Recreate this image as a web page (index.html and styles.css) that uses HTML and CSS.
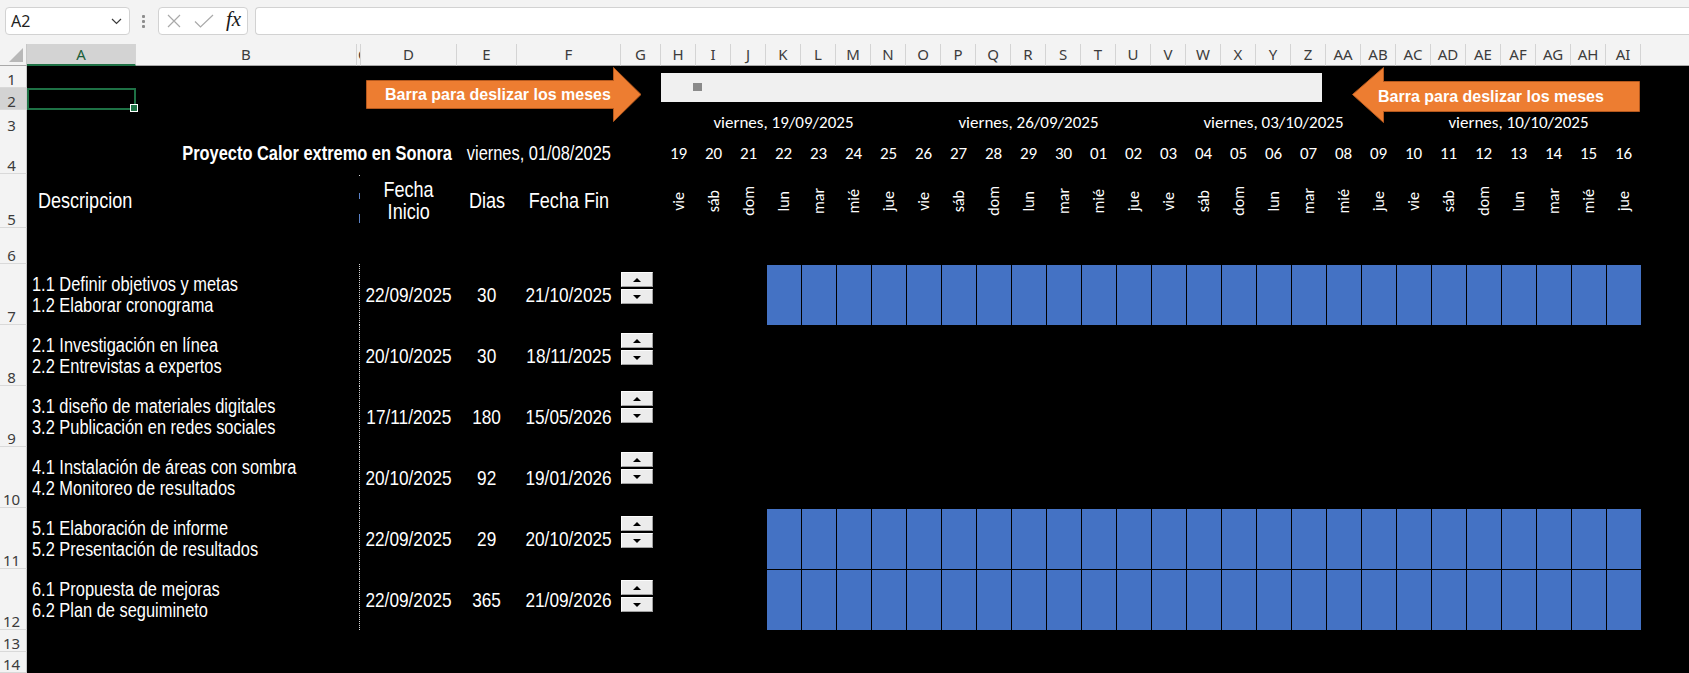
FILE: index.html
```html
<!DOCTYPE html>
<html lang="es">
<head>
<meta charset="utf-8">
<title>Proyecto Calor extremo en Sonora</title>
<link rel="stylesheet" href="styles.css">
</head>
<body>
<div class="app">
  <div class="toolbar">
    <div class="namebox"><span>A2</span>
      <svg width="11" height="7" viewBox="0 0 11 7"><path d="M1 1l4.5 4.5L10 1" fill="none" stroke="#3a3a3a" stroke-width="1.2"/></svg>
    </div>
    <div class="sepdots"><i></i><i></i><i></i></div>
    <div class="fxbox">
      <svg class="ic-x" width="14" height="14" viewBox="0 0 14 14"><path d="M1 1L13 13M13 1L1 13" stroke="#a9a9a9" stroke-width="1.2"/></svg>
      <svg class="ic-ok" width="20" height="14" viewBox="0 0 20 14"><path d="M1 7.5L6.5 13L19 1" fill="none" stroke="#a9a9a9" stroke-width="1.2"/></svg>
      <span class="fx">fx</span>
    </div>
    <div class="formula"></div>
  </div>

  <div class="sheet">
    <div class="row hdr">
      <div class="corner"><svg width="14" height="14" viewBox="0 0 14 14"><path d="M14 0V14H0Z" fill="#b8b8b8"/></svg></div>
      <div class="ch sel">A</div>
      <div class="ch">B</div>
      <div class="ch ccol">C</div>
      <div class="ch">D</div>
      <div class="ch">E</div>
      <div class="ch">F</div>
      <div class="ch">G</div>
      <div class="tl days">
        <div class="ch">H</div><div class="ch">I</div><div class="ch">J</div><div class="ch">K</div><div class="ch">L</div><div class="ch">M</div><div class="ch">N</div>
        <div class="ch">O</div><div class="ch">P</div><div class="ch">Q</div><div class="ch">R</div><div class="ch">S</div><div class="ch">T</div><div class="ch">U</div>
        <div class="ch">V</div><div class="ch">W</div><div class="ch">X</div><div class="ch">Y</div><div class="ch">Z</div><div class="ch">AA</div><div class="ch">AB</div>
        <div class="ch">AC</div><div class="ch">AD</div><div class="ch">AE</div><div class="ch">AF</div><div class="ch">AG</div><div class="ch">AH</div><div class="ch">AI</div>
      </div>
      <div class="ch rest"></div>
    </div>

    <div class="row r22"><div class="rh">1</div></div>
    <div class="row r22"><div class="rh rsel">2</div><div class="a2"></div></div>
    <div class="row r3"><div class="rh">3</div>
      <div class="tl weeks">
        <div>viernes, 19/09/2025</div><div>viernes, 26/09/2025</div><div>viernes, 03/10/2025</div><div>viernes, 10/10/2025</div>
      </div>
    </div>
    <div class="row r4"><div class="rh">4</div>
      <div class="cell title narrow"><span>Proyecto Calor extremo en Sonora</span></div>
      <div class="cell ctr start narrow"><span>viernes, 01/08/2025</span></div>
      <div class="tl days daynum">
        <div>19</div><div>20</div><div>21</div><div>22</div><div>23</div><div>24</div><div>25</div>
        <div>26</div><div>27</div><div>28</div><div>29</div><div>30</div><div>01</div><div>02</div>
        <div>03</div><div>04</div><div>05</div><div>06</div><div>07</div><div>08</div><div>09</div>
        <div>10</div><div>11</div><div>12</div><div>13</div><div>14</div><div>15</div><div>16</div>
      </div>
    </div>
    <div class="row r5"><div class="rh">5</div>
      <div class="cell desc narrow big"><span>Descripcion</span></div>
      <div class="cmark"><i class="dot"></i><i class="dash1"></i><i class="dash2"></i></div>
      <div class="cell ctr two narrow big"><span>Fecha</span><span>Inicio</span></div>
      <div class="cell ctr narrow big"><span>Dias</span></div>
      <div class="cell ctr narrow big"><span>Fecha Fin</span></div>
      <div class="tl days dayname">
        <div><span>vie</span></div><div><span>sáb</span></div><div><span>dom</span></div><div><span>lun</span></div><div><span>mar</span></div><div><span>mié</span></div><div><span>jue</span></div>
        <div><span>vie</span></div><div><span>sáb</span></div><div><span>dom</span></div><div><span>lun</span></div><div><span>mar</span></div><div><span>mié</span></div><div><span>jue</span></div>
        <div><span>vie</span></div><div><span>sáb</span></div><div><span>dom</span></div><div><span>lun</span></div><div><span>mar</span></div><div><span>mié</span></div><div><span>jue</span></div>
        <div><span>vie</span></div><div><span>sáb</span></div><div><span>dom</span></div><div><span>lun</span></div><div><span>mar</span></div><div><span>mié</span></div><div><span>jue</span></div>
      </div>
    </div>
    <div class="row r6"><div class="rh">6</div></div>

    <div class="row task-row"><div class="rh">7</div>
      <div class="cell task narrow"><span>1.1 Definir objetivos y metas</span><span>1.2 Elaborar cronograma</span></div>
      <div class="cdot"></div>
      <div class="cell ctr narrow num"><span>22/09/2025</span></div>
      <div class="cell ctr narrow num"><span>30</span></div>
      <div class="cell ctr narrow num"><span>21/10/2025</span></div>
      <div class="spin"><b class="up"></b><b class="down"></b></div>
      <div class="tl"><div class="bar"></div></div>
    </div>
    <div class="row task-row"><div class="rh">8</div>
      <div class="cell task narrow"><span>2.1 Investigación en línea</span><span>2.2 Entrevistas a expertos</span></div>
      <div class="cdot"></div>
      <div class="cell ctr narrow num"><span>20/10/2025</span></div>
      <div class="cell ctr narrow num"><span>30</span></div>
      <div class="cell ctr narrow num"><span>18/11/2025</span></div>
      <div class="spin"><b class="up"></b><b class="down"></b></div>
    </div>
    <div class="row task-row"><div class="rh">9</div>
      <div class="cell task narrow"><span>3.1 diseño de materiales digitales</span><span>3.2 Publicación en redes sociales</span></div>
      <div class="cdot"></div>
      <div class="cell ctr narrow num"><span>17/11/2025</span></div>
      <div class="cell ctr narrow num"><span>180</span></div>
      <div class="cell ctr narrow num"><span>15/05/2026</span></div>
      <div class="spin spin-hi"><b class="up"></b><b class="down"></b></div>
    </div>
    <div class="row task-row"><div class="rh">10</div>
      <div class="cell task narrow"><span>4.1 Instalación de áreas con sombra</span><span>4.2 Monitoreo de resultados</span></div>
      <div class="cdot"></div>
      <div class="cell ctr narrow num"><span>20/10/2025</span></div>
      <div class="cell ctr narrow num"><span>92</span></div>
      <div class="cell ctr narrow num"><span>19/01/2026</span></div>
      <div class="spin spin-hi"><b class="up"></b><b class="down"></b></div>
    </div>
    <div class="row task-row"><div class="rh">11</div>
      <div class="cell task narrow"><span>5.1 Elaboración de informe</span><span>5.2 Presentación de resultados</span></div>
      <div class="cdot"></div>
      <div class="cell ctr narrow num"><span>22/09/2025</span></div>
      <div class="cell ctr narrow num"><span>29</span></div>
      <div class="cell ctr narrow num"><span>20/10/2025</span></div>
      <div class="spin"><b class="up"></b><b class="down"></b></div>
      <div class="tl"><div class="bar"></div></div>
    </div>
    <div class="row task-row"><div class="rh">12</div>
      <div class="cell task narrow"><span>6.1 Propuesta de mejoras</span><span>6.2 Plan de seguimineto</span></div>
      <div class="cdot"></div>
      <div class="cell ctr narrow num"><span>22/09/2025</span></div>
      <div class="cell ctr narrow num"><span>365</span></div>
      <div class="cell ctr narrow num"><span>21/09/2026</span></div>
      <div class="spin spin-lo"><b class="up"></b><b class="down"></b></div>
      <div class="tl"><div class="bar"></div></div>
    </div>
    <div class="row r22"><div class="rh">13</div></div>
    <div class="row r21"><div class="rh">14</div></div>
  </div>

  <div class="arrow arrow-right">
    <svg width="276" height="55" viewBox="0 0 276 55"><path d="M0.5 13.5H247.5V0.5L275 27.5L247.5 54.5V41.5H0.5Z" fill="#ed7d31" stroke="#b4581d" stroke-width="1"/></svg>
    <span>Barra para deslizar los meses</span>
  </div>
  <div class="arrow arrow-left">
    <svg width="288" height="56" viewBox="0 0 288 56"><path d="M0.5 27.5L31.5 0.5V14.5H287.5V44.5H31.5V55.5Z" fill="#ed7d31" stroke="#b4581d" stroke-width="1"/></svg>
    <span>Barra para deslizar los meses</span>
  </div>
  <div class="scrollbar"><i class="thumb"></i></div>
</div>
</body>
</html>
```

FILE: styles.css
```css
* { box-sizing: border-box; }
html, body { margin: 0; padding: 0; }
body {
  width: 1689px;
  height: 673px;
  overflow: hidden;
  background: #f3f3f3;
  font-family: "Noto Sans", "Open Sans", sans-serif;
}
.app { position: relative; width: 1689px; height: 673px; overflow: hidden; }

/* ---------- toolbar ---------- */
.toolbar {
  height: 44px;
  display: flex;
  align-items: flex-start;
  padding: 7px 0 0 5px;
  background: #f3f3f3;
}
.namebox {
  width: 125px;
  height: 28px;
  background: #fff;
  border: 1px solid #d2d2d2;
  border-radius: 4px;
  display: flex;
  align-items: center;
  justify-content: space-between;
  padding: 0 7px 0 5px;
  font-size: 16px;
  color: #1f1f1f;
}
.sepdots {
  width: 3px;
  margin: 8px 13px 0 12px;
  display: flex;
  flex-direction: column;
  gap: 2px;
}
.sepdots i { display: block; width: 3px; height: 3px; background: #8d8d8d; border-radius: 1px; }
.fxbox {
  width: 90px;
  height: 28px;
  background: #fff;
  border: 1px solid #d2d2d2;
  border-radius: 4px;
  display: flex;
  align-items: center;
  padding-left: 8px;
}
.ic-ok { margin-left: 13px; }
.fx {
  margin-left: 12px;
  font-family: "Liberation Serif", "DejaVu Serif", serif;
  font-style: italic;
  font-size: 21px;
  color: #1a1a1a;
  line-height: 1;
  margin-top: -3px;
}
.formula {
  flex: 1;
  margin-left: 7px;
  height: 28px;
  background: #fff;
  border: 1px solid #d2d2d2;
  border-right: none;
  border-radius: 4px 0 0 4px;
}

/* ---------- sheet grid ---------- */
.row {
  display: grid;
  grid-template-columns: 27px 109px 221px 4px 96px 60px 104px 40px 980px 1fr;
  background: #000;
  color: #fff;
}
.tl { grid-column: 9 / 10; }
.days { display: grid; grid-template-columns: repeat(28, 35px); }

.hdr { height: 22px; background: #f3f3f3; }
.corner {
  border-right: 1px solid #c8c8c8;
  border-bottom: 1px solid #a9a9a9;
  display: flex;
  align-items: flex-end;
  justify-content: flex-end;
  padding: 0 3px 3px 0;
}
.ch {
  height: 22px;
  border-right: 1px solid #d4d4d4;
  border-bottom: 1px solid #a9a9a9;
  font-size: 15px;
  line-height: 21px;
  color: #3c3c3c;
  text-align: center;
  overflow: hidden;
  white-space: nowrap;
}
.ch.sel { background: #d3d3d3; color: #1b5e3a; border-bottom: 2px solid #1e7145; }
.ch.ccol { text-align: left; padding-left: 1px; }
.ch.rest { border-right: none; }

.rh {
  grid-column: 1 / 2;
  background: #f3f3f3;
  border-right: 1px solid #c8c8c8;
  border-bottom: 1px solid #d9d9d9;
  font-size: 15px;
  line-height: 16px;
  color: #3c3c3c;
  display: flex;
  align-items: flex-end;
  justify-content: center;
  padding-right: 3px;
}
.rh.rsel { background: #d3d3d3; }

.r22 { height: 22px; }
.r21 { height: 21px; }
.r3 { height: 23px; }
.r4 { height: 41px; }
.r5 { height: 54px; }
.r6 { height: 36px; }
.task-row { height: 61px; }

.a2 {
  grid-column: 2 / 3;
  border: 2px solid #1e7145;
  position: relative;
}
.a2::after {
  content: "";
  position: absolute;
  right: -4px;
  bottom: -4px;
  width: 6px;
  height: 6px;
  background: #1e7145;
  border: 1px solid #fff;
}

/* ---------- text cells (Arial Narrow look) ---------- */
.narrow {
  font-family: "Liberation Sans", Arial, sans-serif;
  font-size: 20px;
}
.narrow.big { font-size: 22px; }
.narrow.num { font-size: 21px; }
.narrow span {
  display: inline-block;
  transform: scaleX(0.82);
  transform-origin: center center;
}
.cell { display: flex; align-items: center; white-space: nowrap; }
.ctr { justify-content: center; }
.two { flex-direction: column; line-height: 22px; }
.title { grid-column: 3 / 6; justify-content: flex-end; padding-right: 5px; font-weight: bold; }
.title span { transform-origin: right center; }
.start { grid-column: 6 / 8; }
.desc { grid-column: 2 / 4; padding-left: 11px; }
.desc span { transform-origin: left center; }
.task {
  grid-column: 2 / 4;
  flex-direction: column;
  align-items: flex-start;
  justify-content: center;
  padding-left: 5px;
  line-height: 21px;
}
.task span { transform-origin: left center; }

.weeks { display: grid; grid-template-columns: repeat(4, 245px); }
.weeks div, .daynum div, .dayname span {
  font-family: "Carlito", "Lato", sans-serif;
}
.weeks div { text-align: center; font-size: 17px; line-height: 23px; padding-top: 1px; }
.daynum div { display: flex; align-items: center; justify-content: center; font-size: 17px; }
.dayname div { display: flex; align-items: center; justify-content: center; }
.dayname span {
  writing-mode: vertical-rl;
  transform: rotate(180deg);
  font-size: 16px;
  line-height: 17px;
}

.cmark { display: flex; flex-direction: column; align-items: center; padding-left: 1px; }
.cmark i { display: block; width: 1px; }
.cmark .dot { height: 1px; margin-top: 1px; background: #ddd; }
.cmark .dash1 { height: 6px; margin-top: 17px; background: #5b82c6; }
.cmark .dash2 { height: 9px; margin-top: 15px; background: #5b82c6; }

.cdot { border-left: 1px dotted #d8d8d8; margin-left: 2px; }

/* ---------- spinners ---------- */
.spin { display: flex; flex-direction: column; gap: 2px; padding-top: 8px; }
.spin-hi { padding-top: 5px; }
.spin-lo { padding-top: 11px; }
.spin b {
  width: 32px;
  height: 15px;
  background: #ececec;
  border: 1px solid;
  border-color: #fdfdfd #9f9f9f #9f9f9f #fdfdfd;
  display: flex;
  align-items: center;
  justify-content: center;
}
.spin .up::after {
  content: "";
  border-left: 4px solid transparent;
  border-right: 4px solid transparent;
  border-bottom: 4px solid #000;
}
.spin .down::after {
  content: "";
  border-left: 4px solid transparent;
  border-right: 4px solid transparent;
  border-top: 4px solid #000;
}

/* ---------- gantt bars ---------- */
.bar {
  margin: 1px 0 0 105px;
  height: 60px;
  background: repeating-linear-gradient(90deg, #000 0 1px, #4472c4 1px 35px);
}

/* ---------- overlays ---------- */
.arrow { position: absolute; }
.arrow svg { display: block; }
.arrow span {
  position: absolute;
  font-family: "Liberation Sans", Arial, sans-serif;
  font-weight: bold;
  font-size: 16px;
  color: #fff;
  white-space: nowrap;
  line-height: 18px;
}
.arrow-right { left: 366px; top: 67px; }
.arrow-right span { left: 19px; top: 19px; }
.arrow-left { left: 1352px; top: 67px; }
.arrow-left span { left: 26px; top: 21px; }

.scrollbar {
  position: absolute;
  left: 661px;
  top: 73px;
  width: 661px;
  height: 29px;
  background: #f0f0f0;
}
.thumb {
  position: absolute;
  left: 32px;
  top: 10px;
  width: 9px;
  height: 8px;
  background: #8a8a8a;
}
```
